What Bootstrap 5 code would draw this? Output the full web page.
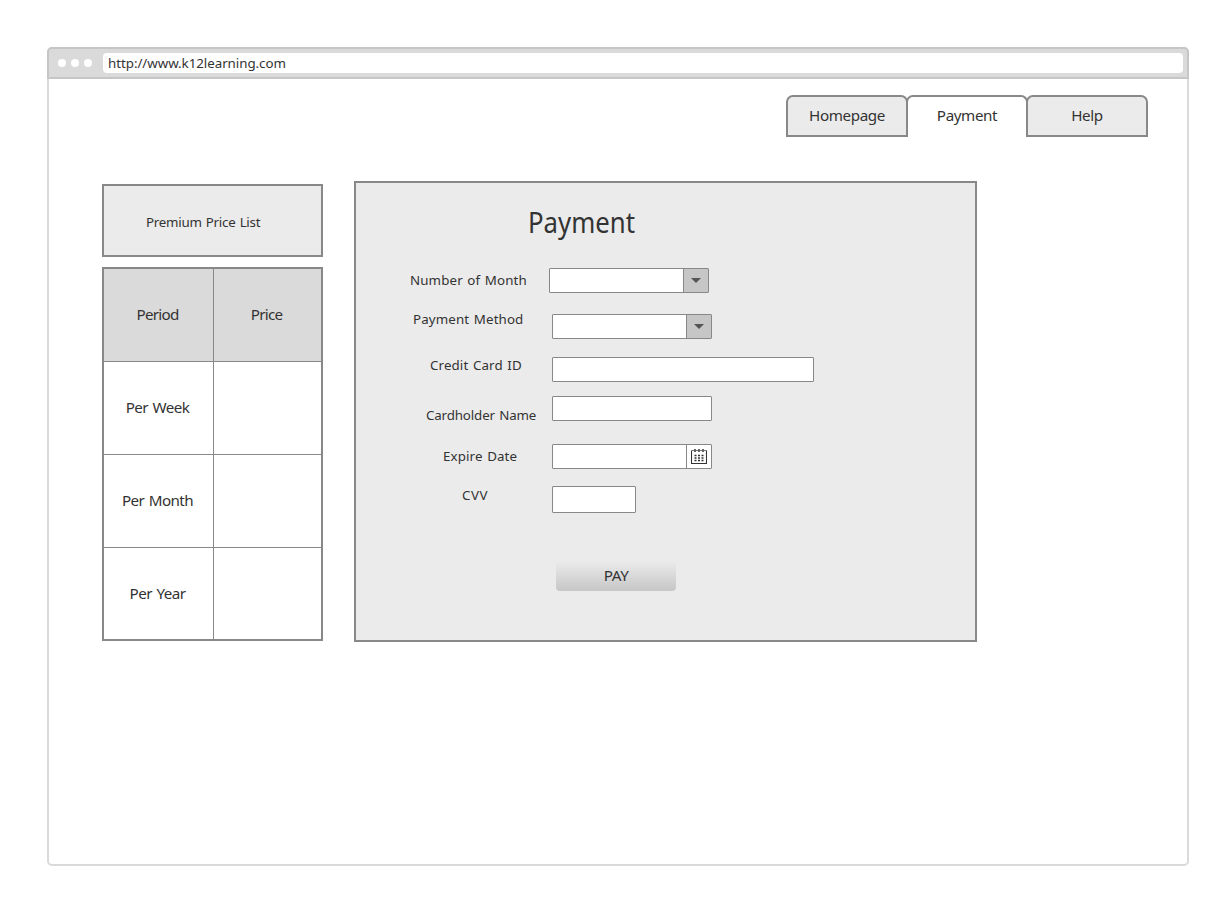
<!DOCTYPE html>
<html lang="en">
<head>
<meta charset="utf-8">
<meta name="viewport" content="width=device-width, initial-scale=1">
<title>Payment</title>
<link href="https://cdn.jsdelivr.net/npm/bootstrap@5.3.0/dist/css/bootstrap.min.css" rel="stylesheet">
<style>
body{font-family:"Noto Sans","Open Sans",sans-serif;color:#333;font-size:15.2px;letter-spacing:-.4px;line-height:20px;background:#fff}
.window{width:1142px;height:819px;margin:47px 0 0 47px;border:2px solid #dadada;border-radius:5px}
.titlebar{height:32px;margin:-2px -2px 0;background:#dadada;border:2px solid #c6c6c6;border-radius:5px 5px 0 0;padding:4px 4px 4px 9px}
.dot{width:8px;height:8px;background:#fff;margin-right:5px}
.address{height:20px;margin-left:6px;border-radius:4px;padding-left:5px;font-size:13.33px;letter-spacing:-.04px}
.tabs{margin:16px 39px 0 0}
.tabs .nav-link{width:122px;height:42px;margin-left:-2px;border:2px solid #888;border-radius:7px 7px 0 0;background:#ebebeb;color:#333;padding:8px 0;text-align:center}
.tabs .nav-link.active{background:#fff;border-bottom:0;color:#333}
.content{margin:44px 0 0 53px}
.pricing{width:221px;margin-top:3px}
.heading-box{height:73px;border:2px solid #888;background:#ebebeb;padding:26px 0 0 42px;font-size:13.33px;letter-spacing:-.26px;word-spacing:1px}
.price-grid{margin-top:10px;height:374px;border:2px solid #888;display:grid;grid-template-columns:110px 107px;grid-template-rows:93px 93px 93px 91px}
.price-grid>div{display:flex;align-items:center;justify-content:center;border-bottom:1px solid #888;padding:0 2px 2px 0;letter-spacing:-.55px;word-spacing:1px}
.price-grid>div:nth-child(odd){border-right:1px solid #888}
.price-grid>div:nth-child(-n+2){background:#dadada;letter-spacing:-.75px}
.price-grid>div:nth-last-child(-n+2){border-bottom:0}
.panel{width:623px;height:461px;margin-left:31px;border:2px solid #888;background:#ebebeb}
.panel h1{width:130px;font-size:29.33px;line-height:40px;letter-spacing:0;margin:19px 0 26px 172px;font-weight:400;transform:scaleX(.878);transform-origin:left}
.field{display:flex;align-items:flex-start}
.field label{width:196px;flex:none;white-space:nowrap;font-size:13.33px;letter-spacing:.12px;word-spacing:1px}
.control{height:25px;width:160px;border:1px solid #888;border-radius:1px;background:#fff;display:flex;justify-content:flex-end}
.addon{width:25px;border-left:1px solid #888;display:flex;align-items:center;justify-content:center}
.addon.drop{background:#c6c6c6}
.f-months{height:41px}.f-months label{width:193px;padding:2px 0 0 54px}
.f-method{height:46px}.f-method label{padding:0 0 0 57px}.f-method .control{margin-top:5px}
.f-card{height:41px}.f-card label{padding:0 0 0 74px}.f-card .control{width:262px;margin-top:2px}
.f-holder{height:48px}.f-holder label{padding:9px 0 0 70px;letter-spacing:-.14px}
.f-expire{height:41px}.f-expire label{padding:2px 0 0 87px}
.f-cvv{height:76px}.f-cvv label{padding:0 0 0 106px;letter-spacing:.5px}.f-cvv .control{width:84px;height:27px;margin-top:1px}
.pay{width:120px;height:30px;margin-left:200px;padding:0;border:0;border-radius:4px;background:linear-gradient(#ebebeb,#c6c6c6);color:#333;font-size:15.2px;letter-spacing:-.36px;line-height:28px;padding-bottom:2px}
</style>
</head>
<body>
<main class="window">
  <div class="titlebar d-flex align-items-center">
    <span class="dot rounded-circle"></span><span class="dot rounded-circle"></span><span class="dot rounded-circle"></span>
    <div class="address bg-white flex-grow-1">http://www.k12learning.com</div>
  </div>
  <nav class="tabs nav justify-content-end">
    <a class="nav-link" href="#">Homepage</a>
    <a class="nav-link active" href="#">Payment</a>
    <a class="nav-link" href="#">Help</a>
  </nav>
  <div class="content d-flex align-items-start">
    <section class="pricing">
      <div class="heading-box">Premium Price List</div>
      <div class="price-grid">
        <div>Period</div><div>Price</div>
        <div>Per Week</div><div></div>
        <div>Per Month</div><div></div>
        <div>Per Year</div><div></div>
      </div>
    </section>
    <form class="panel">
      <h1>Payment</h1>
      <div class="field f-months"><label>Number of Month</label><div class="control"><span class="addon drop"><svg width="10" height="5"><path d="M0 0H10L5 5Z" fill="#555"/></svg></span></div></div>
      <div class="field f-method"><label>Payment Method</label><div class="control"><span class="addon drop"><svg width="10" height="5"><path d="M0 0H10L5 5Z" fill="#555"/></svg></span></div></div>
      <div class="field f-card"><label>Credit Card ID</label><div class="control"></div></div>
      <div class="field f-holder"><label>Cardholder Name</label><div class="control"></div></div>
      <div class="field f-expire"><label>Expire Date</label><div class="control"><span class="addon"><svg width="16" height="17" viewBox="0 0 16 17"><path d="M.5 2.5V15.5H15.5V2.5" fill="none" stroke="#333" stroke-width="1.1" stroke-linejoin="round"/><path d="M.5 2.5h15" stroke="#777"/><path d="M4 1v3M8 1v3M12 1v3" stroke="#666" stroke-width="2"/><path d="M3.5 7.5h9M3.5 10h9M3.5 12.5h9" stroke="#333" stroke-width="1.4" stroke-dasharray="2 1.5"/></svg></span></div></div>
      <div class="field f-cvv"><label>CVV</label><div class="control"></div></div>
      <button type="button" class="btn pay">PAY</button>
    </form>
  </div>
</main>
</body>
</html>
